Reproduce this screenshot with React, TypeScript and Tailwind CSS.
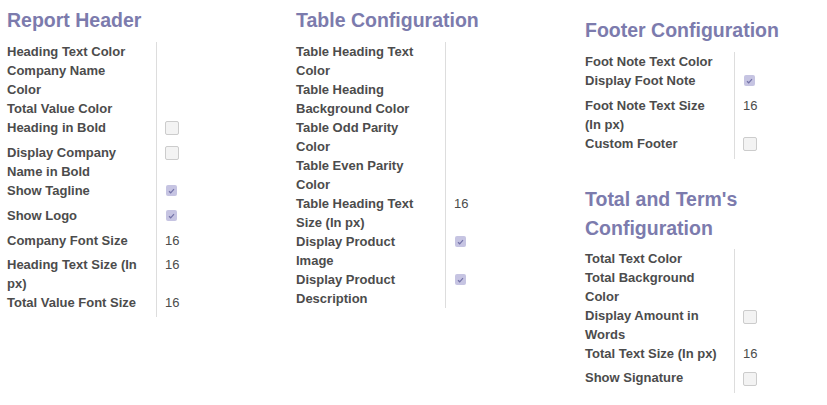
import React from "react";

type Kind = "none" | "on" | "off" | "num";
type Row = { label: string; kind: Kind; value?: string };

const Check = ({ kind }: { kind: "on" | "off" }) =>
  kind === "off" ? (
    <div className="mt-[3.5px] w-[14px] h-[14px] rounded-[2px] border border-[#cccccc] bg-[#f3f3f3]" />
  ) : (
    <div className="mt-[4.5px] ml-[1px] w-[11px] h-[11px] rounded-[2px] bg-[#c6c4e2] flex items-center justify-center">
      <svg width="7" height="6" viewBox="0 0 7 6">
        <path d="M1 3.2 L2.7 4.8 L6 1.2" fill="none" stroke="#7473a8" strokeWidth="1.2" />
      </svg>
    </div>
  );

const Table = ({ rows }: { rows: Row[] }) => (
  <div className="flex flex-col">
    {rows.map((r, i) => (
      <div key={i} className="flex">
        <div
          className={
            "w-[150px] shrink-0 box-border pr-[14.5px] border-r border-[#dddddd] font-bold text-[13px] leading-[19px] text-[#4c4c4c] " +
            (r.kind === "on" || r.kind === "off" ? "min-h-[25px]" : r.kind === "num" ? "min-h-[24px]" : "")
          }
        >
          {r.label}
        </div>
        <div className="pl-[8px] text-[13px] leading-[19px] text-[#4c4c4c]">
          {r.kind === "on" || r.kind === "off" ? <Check kind={r.kind} /> : null}
          {r.kind === "num" ? <span>{r.value}</span> : null}
        </div>
      </div>
    ))}
  </div>
);

const Heading = ({ children }: { children: React.ReactNode }) => (
  <h2 className="text-[19.5px] leading-[29px] font-bold text-[#7c7bad] mb-[6.5px]">{children}</h2>
);

export default function App() {
  return (
    <div
      className="w-[827px] h-[405px] bg-white overflow-hidden grid grid-cols-[289px_289px_1fr]"
      style={{ fontFamily: '"Liberation Sans", Arial, sans-serif' }}
    >
      <div className="pl-[7px] pt-[6px]">
        <Heading>Report Header</Heading>
        <Table
          rows={[
            { label: "Heading Text Color", kind: "none" },
            { label: "Company Name Color", kind: "none" },
            { label: "Total Value Color", kind: "none" },
            { label: "Heading in Bold", kind: "off" },
            { label: "Display Company Name in Bold", kind: "off" },
            { label: "Show Tagline", kind: "on" },
            { label: "Show Logo", kind: "on" },
            { label: "Company Font Size", kind: "num", value: "16" },
            { label: "Heading Text Size (In px)", kind: "num", value: "16" },
            { label: "Total Value Font Size", kind: "num", value: "16" },
          ]}
        />
      </div>
      <div className="pl-[7px] pt-[6px]">
        <Heading>Table Configuration</Heading>
        <Table
          rows={[
            { label: "Table Heading Text Color", kind: "none" },
            { label: "Table Heading Background Color", kind: "none" },
            { label: "Table Odd Parity Color", kind: "none" },
            { label: "Table Even Parity Color", kind: "none" },
            { label: "Table Heading Text Size (In px)", kind: "num", value: "16" },
            { label: "Display Product Image", kind: "on" },
            { label: "Display Product Description", kind: "on" },
          ]}
        />
      </div>
      <div className="pl-[7px] pt-[16px]">
        <Heading>Footer Configuration</Heading>
        <Table
          rows={[
            { label: "Foot Note Text Color", kind: "none" },
            { label: "Display Foot Note", kind: "on" },
            { label: "Foot Note Text Size (In px)", kind: "num", value: "16" },
            { label: "Custom Footer", kind: "off" },
          ]}
        />
        <div className="mt-[26px]">
          <Heading>Total and Term's Configuration</Heading>
          <Table
            rows={[
              { label: "Total Text Color", kind: "none" },
              { label: "Total Background Color", kind: "none" },
              { label: "Display Amount in Words", kind: "off" },
              { label: "Total Text Size (In px)", kind: "num", value: "16" },
              { label: "Show Signature", kind: "off" },
            ]}
          />
        </div>
      </div>
    </div>
  );
}
